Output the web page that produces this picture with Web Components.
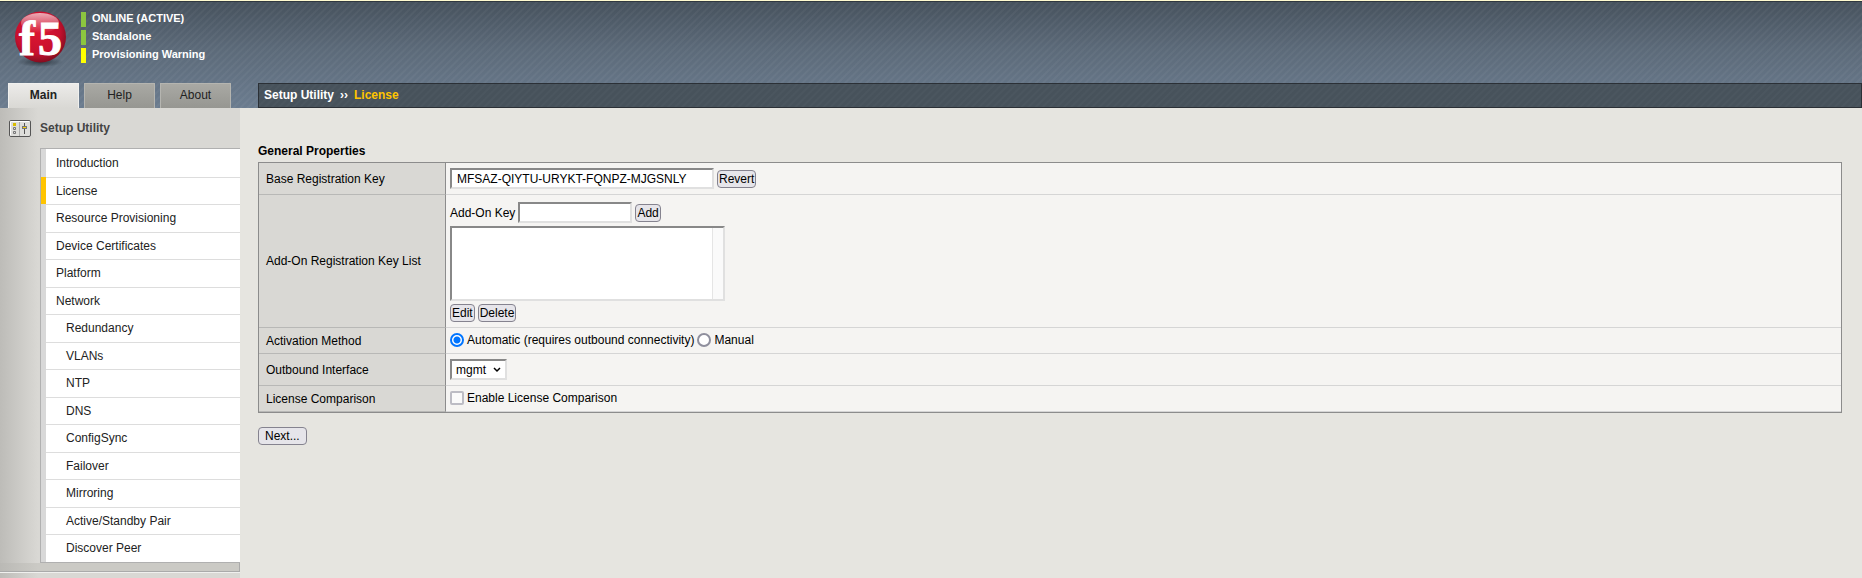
<!DOCTYPE html>
<html lang="en">
<head>
<meta charset="utf-8">
<title>Setup Utility - License</title>
<style>
  body {
    margin: 0;
    min-height: 100vh;
    display: flex;
    background: #e6e5e0;
    font: 12px/14px "Liberation Sans", Arial, sans-serif;
    color: #000;
  }
  setup-page { flex: 1; }
</style>
</head>
<body>
<setup-page></setup-page>

<script>
class SetupPage extends HTMLElement {
  constructor() {
    super();
    this.attachShadow({ mode: 'open' });
  }

  connectedCallback() {
    this.shadowRoot.innerHTML = `
      <style>
        :host { display: flex; flex-direction: column; min-width: 0; }
        header {
          display: flex;
          flex-direction: column;
          justify-content: space-between;
          min-height: 107px;
          border-top: 1px solid #fffbd0;
          box-shadow: inset 0 1px #303840;
          background:
            repeating-linear-gradient(135deg, #ffffff0a 0 1px, transparent 2px 4px, #ffffff0a 5px),
            linear-gradient(#46525d, #5c6a79 45%, #6b7c8f);
        }
        .bars { display: flex; align-items: flex-end; }
        .top { display: flex; gap: 14px; padding: 10px 13px 0; }
        nav-tabs { width: 258px; flex: none; }
        bread-crumb { flex: 1; }
        .body { flex: 1; display: flex; }
        side-menu { width: 240px; flex: none; }
        main { flex: 1; min-width: 0; padding: 36px 20px 20px 18px; }
      </style>
      <header>
        <div class="top">
          <brand-logo></brand-logo>
          <device-status></device-status>
        </div>
        <div class="bars">
          <nav-tabs></nav-tabs>
          <bread-crumb><span>Setup Utility</span><span slot="current">License</span></bread-crumb>
        </div>
      </header>
      <div class="body">
        <side-menu></side-menu>
        <main><license-form></license-form></main>
      </div>
    `;
  }
}

class BrandLogo extends HTMLElement {
  constructor() {
    super();
    this.attachShadow({ mode: 'open' });
    this.shadowRoot.innerHTML = `
      <style>
        :host { display: block; height: 56px; }
        svg { display: block; overflow: visible; }
        text {
          fill: #fff;
          stroke: #fff;
          font-family: "Liberation Serif", serif;
          font-weight: bold;
        }
      </style>
      <svg width="54" height="56" viewBox="0 0 54 56" role="img" aria-label="f5">
        <defs>
          <radialGradient id="ball" cx="45%" cy="40%" r="60%">
            <stop offset="0" stop-color="#dc1630"/>
            <stop offset=".7" stop-color="#c8102e"/>
            <stop offset="1" stop-color="#870d20"/>
          </radialGradient>
          <linearGradient id="gloss" x2="0" y2="1">
            <stop offset="0" stop-color="#fff" stop-opacity=".65"/>
            <stop offset="1" stop-color="#fff" stop-opacity="0"/>
          </linearGradient>
          <radialGradient id="shade">
            <stop offset="0" stop-color="#222b33" stop-opacity=".8"/>
            <stop offset="1" stop-color="#222b33" stop-opacity="0"/>
          </radialGradient>
        </defs>
        <ellipse cx="27" cy="51" rx="23" ry="5" fill="url(#shade)"/>
        <circle cx="27.500" cy="26" r="25.500" fill="url(#ball)"/>
        <ellipse cx="27" cy="12" rx="19" ry="10" fill="url(#gloss)"/>
        <text x="6" y="44" font-size="48">f</text>
        <text x="25" y="44" font-size="48">5</text>
      </svg>
    `;
  }
}

class DeviceStatus extends HTMLElement {
  constructor() {
    super();
    this.attachShadow({ mode: 'open' });
    this.shadowRoot.innerHTML = `
      <style>
        :host { display: block; }
        ul {
          display: flex;
          flex-direction: column;
          gap: 3px;
          margin: 0;
          padding: 1px 0 0;
          list-style: none;
          color: #fff;
          font-size: 11px;
          font-weight: bold;
        }
        li { border-left: 5px solid #8cc63f; padding: 0 0 2px 6px; line-height: 13px; }
        .warn { border-color: #ffff00; }
      </style>
      <ul>
        <li>ONLINE (ACTIVE)</li>
        <li>Standalone</li>
        <li class="warn">Provisioning Warning</li>
      </ul>
    `;
  }
}

class NavTabs extends HTMLElement {
  constructor() {
    super();
    this.attachShadow({ mode: 'open' });
    this.shadowRoot.innerHTML = `
      <style>
        :host { display: block; }
        nav { display: flex; gap: 5px; padding-left: 8px; }
        a {
          box-sizing: border-box;
          width: 71px;
          height: 25px;
          padding-top: 4px;
          border: 1px solid #b5b5b0;
          border-bottom: 0;
          background: linear-gradient(#a9a9a4, #969691);
          color: #222;
          text-align: center;
          text-decoration: none;
        }
        .active { background: linear-gradient(#ecebe9, #d9d8d4); border-color: #f0f0ee; font-weight: bold; }
      </style>
      <nav>
        <a class="active" href="#main">Main</a>
        <a href="#help">Help</a>
        <a href="#about">About</a>
      </nav>
    `;
  }
}

class BreadCrumb extends HTMLElement {
  constructor() {
    super();
    this.attachShadow({ mode: 'open' });
    this.shadowRoot.innerHTML = `
      <style>
        :host {
          box-sizing: border-box;
          display: flex;
          gap: 6px;
          height: 25px;
          padding: 4px 5px;
          border: 1px solid #2b3036;
          background: repeating-linear-gradient(135deg, #4b565f 0 1px, #47525b 2px 4px, #4b565f 5px);
          color: #fff;
          font-weight: bold;
        }
        .current { color: #ffc400; }
      </style>
      <slot></slot>
      <span>››</span>
      <span class="current"><slot name="current"></slot></span>
    `;
  }
}

class SideMenu extends HTMLElement {
  constructor() {
    super();
    this.attachShadow({ mode: 'open' });
    this.items = ['Introduction', 'License', 'Resource Provisioning', 'Device Certificates', 'Platform', 'Network'];
    this.subItems = ['Redundancy', 'VLANs', 'NTP', 'DNS', 'ConfigSync', 'Failover', 'Mirroring',
      'Active/Standby Pair', 'Discover Peer'];
  }

  connectedCallback() {
    this.render();
  }

  render() {
    this.shadowRoot.innerHTML = `
      <style>
        :host { display: block; background: linear-gradient(90deg, #bdbcb8, #d9d8d4 38px); }
        h2 {
          display: flex;
          align-items: flex-start;
          gap: 9px;
          margin: 0;
          padding: 12px 0 10px 9px;
          color: #444;
          font-size: 12px;
          line-height: 16px;
        }
        h2 svg { width: 22px; height: 18px; }
        ul {
          display: flex;
          flex-direction: column;
          min-height: 413px;
          margin: 0 0 0 40px;
          padding: 0;
          border: 1px solid #b0b0b0;
          border-right: 0;
          list-style: none;
        }
        li {
          flex: 1;
          display: flex;
          border-left: 5px solid #d8d8d8;
          background: linear-gradient(#ddd, #ddd) no-repeat top / 100% 1px #fff;
        }
        li:first-child { background: #fff; }
        .active { border-left-color: #ffc400; }
        a {
          flex: 1;
          padding: 7px 10px 5px;
          color: #222;
          text-decoration: none;
        }
        .sub a { padding-left: 20px; }
        .foot {
          box-sizing: border-box;
          height: 9px;
          border: solid #aaa;
          border-width: 0 1px 1px 0;
          background: linear-gradient(90deg, #bab9b5, #cbcac5 38px);
          box-shadow: 0 1px #f0f0ee;
        }
      </style>
      <h2>
        <svg viewBox="0 0 22 18" aria-hidden="true">
          <rect x=".5" y=".5" width="21" height="16" rx="1.500" fill="#dededb" stroke="#555"/>
          <path d="M1.500 15.500V1.500H20.500" fill="none" stroke="#fff"/>
          <path d="M10.500 2V16" stroke="#aaa"/>
          <path d="M4.500 3.500h2v2h-2zM4.500 7.500h2v2h-2zM4.500 11.500h2v2h-2z" fill="#ddd" stroke="#777"/>
          <rect x="4" y="3" width="3" height="3" fill="#d9bd00"/>
          <path d="M15.500 3V14" stroke="#555"/>
          <rect x="13.500" y="6.500" width="4" height="2" fill="#ffd500" stroke="#777"/>
        </svg>
        Setup Utility
      </h2>
      <nav>
        <ul>
          ${this.items.map(item => `<li class="${item === 'License' ? 'active' : ''}"><a href="#">${item}</a></li>`).join('')}
          ${this.subItems.map(item => `<li class="sub"><a href="#">${item}</a></li>`).join('')}
        </ul>
      </nav>
      <div class="foot"></div>
    `;
  }
}

class ActionButton extends HTMLElement {
  constructor() {
    super();
    this.attachShadow({ mode: 'open' });
    this.shadowRoot.innerHTML = `
      <style>
        :host { display: block; }
        button {
          display: block;
          padding: 1px var(--button-pad, 1px);
          border: 1px solid #85838f;
          border-radius: 4px;
          background: #e6e5ea;
          color: #000;
          font: inherit;
        }
      </style>
      <button type="button"><slot></slot></button>
    `;
  }
}

class LicenseForm extends HTMLElement {
  constructor() {
    super();
    this.attachShadow({ mode: 'open' });
  }

  connectedCallback() {
    this.shadowRoot.innerHTML = `
      <style>
        :host { display: block; }
        h1 { margin: 0 0 4px; font-size: 12px; line-height: 14px; }
        table {
          width: 100%;
          margin-bottom: 14px;
          border-collapse: separate;
          border-spacing: 0;
          border: 1px solid #8c8c8c;
        }
        th, td { padding: 0 5px; border-bottom: 1px solid #d5d5d5; background: #f5f4f2; }
        th {
          box-sizing: border-box;
          width: 187px;
          padding-left: 7px;
          border-right: 1px solid #8c8c8c;
          border-bottom-color: #b8b8b6;
          background: #d9d8d4;
          font-weight: normal;
          text-align: left;
        }
        td { padding: 5px 5px 5px 4px; }
        .choice { padding-top: 5px; padding-bottom: 6px; }
        .keys { padding-top: 7px; }
        .row { display: flex; align-items: center; gap: 3px; }
        .row + .row { margin-top: 3px; }
        input[type=text], select {
          box-sizing: border-box;
          height: 21px;
          margin: 0;
          padding: 0 5px;
          border: 2px solid;
          border-color: #888 #e0e0e0 #e0e0e0 #888;
          border-radius: 0;
          background: #fff;
          color: #000;
          font: inherit;
          outline: 0;
        }
        #base-key { width: 264px; }
        #addon-key { width: 114px; }
        select {
          appearance: none;
          width: 57px;
          padding: 0 4px;
          background: url("data:image/svg+xml,%3Csvg xmlns='http://www.w3.org/2000/svg' width='8' height='6'%3E%3Cpath d='M1 1l3 3 3-3' fill='none' stroke='%23000' stroke-width='1.500'/%3E%3C/svg%3E") no-repeat right 4px center #fff;
        }
        select[multiple] {
          width: 275px;
          height: 75px;
          background: linear-gradient(90deg, #e5e5e5 1px, #fafafa 1px) no-repeat right / 11px 100% #fff;
          overflow: hidden;
        }
        input[type=radio], input[type=checkbox] {
          appearance: none;
          box-sizing: border-box;
          width: 14px;
          height: 14px;
          margin: 0;
          border: 2px solid #8f8f9d;
          border-radius: 50%;
          background: #fff;
        }
        input[type=radio]:checked {
          border-color: #0075ff;
          background: radial-gradient(circle, #0075ff 3px, #fff 4px);
        }
        input[type=checkbox] { border-color: #bcbcc4; border-radius: 2px; background: #fafafa; }
        .next { --button-pad: 6px; width: fit-content; }
      </style>
      <h1>General Properties</h1>
      <form>
        <table>
          <tr>
            <th scope="row"><label for="base-key">Base Registration Key</label></th>
            <td>
              <div class="row">
                <input type="text" id="base-key" value="MFSAZ-QIYTU-URYKT-FQNPZ-MJGSNLY">
                <action-button>Revert</action-button>
              </div>
            </td>
          </tr>
          <tr>
            <th scope="row"><label for="key-list">Add-On Registration Key List</label></th>
            <td class="keys">
              <div class="row">
                <label for="addon-key">Add-On Key</label>
                <input type="text" id="addon-key">
                <action-button>Add</action-button>
              </div>
              <div class="row"><select id="key-list" multiple></select></div>
              <div class="row">
                <action-button>Edit</action-button>
                <action-button>Delete</action-button>
              </div>
            </td>
          </tr>
          <tr>
            <th scope="row">Activation Method</th>
            <td class="choice">
              <div class="row">
                <input type="radio" name="method" id="automatic" checked>
                <label for="automatic">Automatic (requires outbound connectivity)</label>
                <input type="radio" name="method" id="manual">
                <label for="manual">Manual</label>
              </div>
            </td>
          </tr>
          <tr>
            <th scope="row"><label for="interface">Outbound Interface</label></th>
            <td>
              <div class="row">
                <select id="interface"><option>mgmt</option></select>
              </div>
            </td>
          </tr>
          <tr>
            <th scope="row">License Comparison</th>
            <td class="choice">
              <div class="row">
                <input type="checkbox" id="compare">
                <label for="compare">Enable License Comparison</label>
              </div>
            </td>
          </tr>
        </table>
        <action-button class="next">Next...</action-button>
      </form>
    `;
  }
}

customElements.define('brand-logo', BrandLogo);
customElements.define('device-status', DeviceStatus);
customElements.define('nav-tabs', NavTabs);
customElements.define('bread-crumb', BreadCrumb);
customElements.define('side-menu', SideMenu);
customElements.define('action-button', ActionButton);
customElements.define('license-form', LicenseForm);
customElements.define('setup-page', SetupPage);
</script>
</body>
</html>
